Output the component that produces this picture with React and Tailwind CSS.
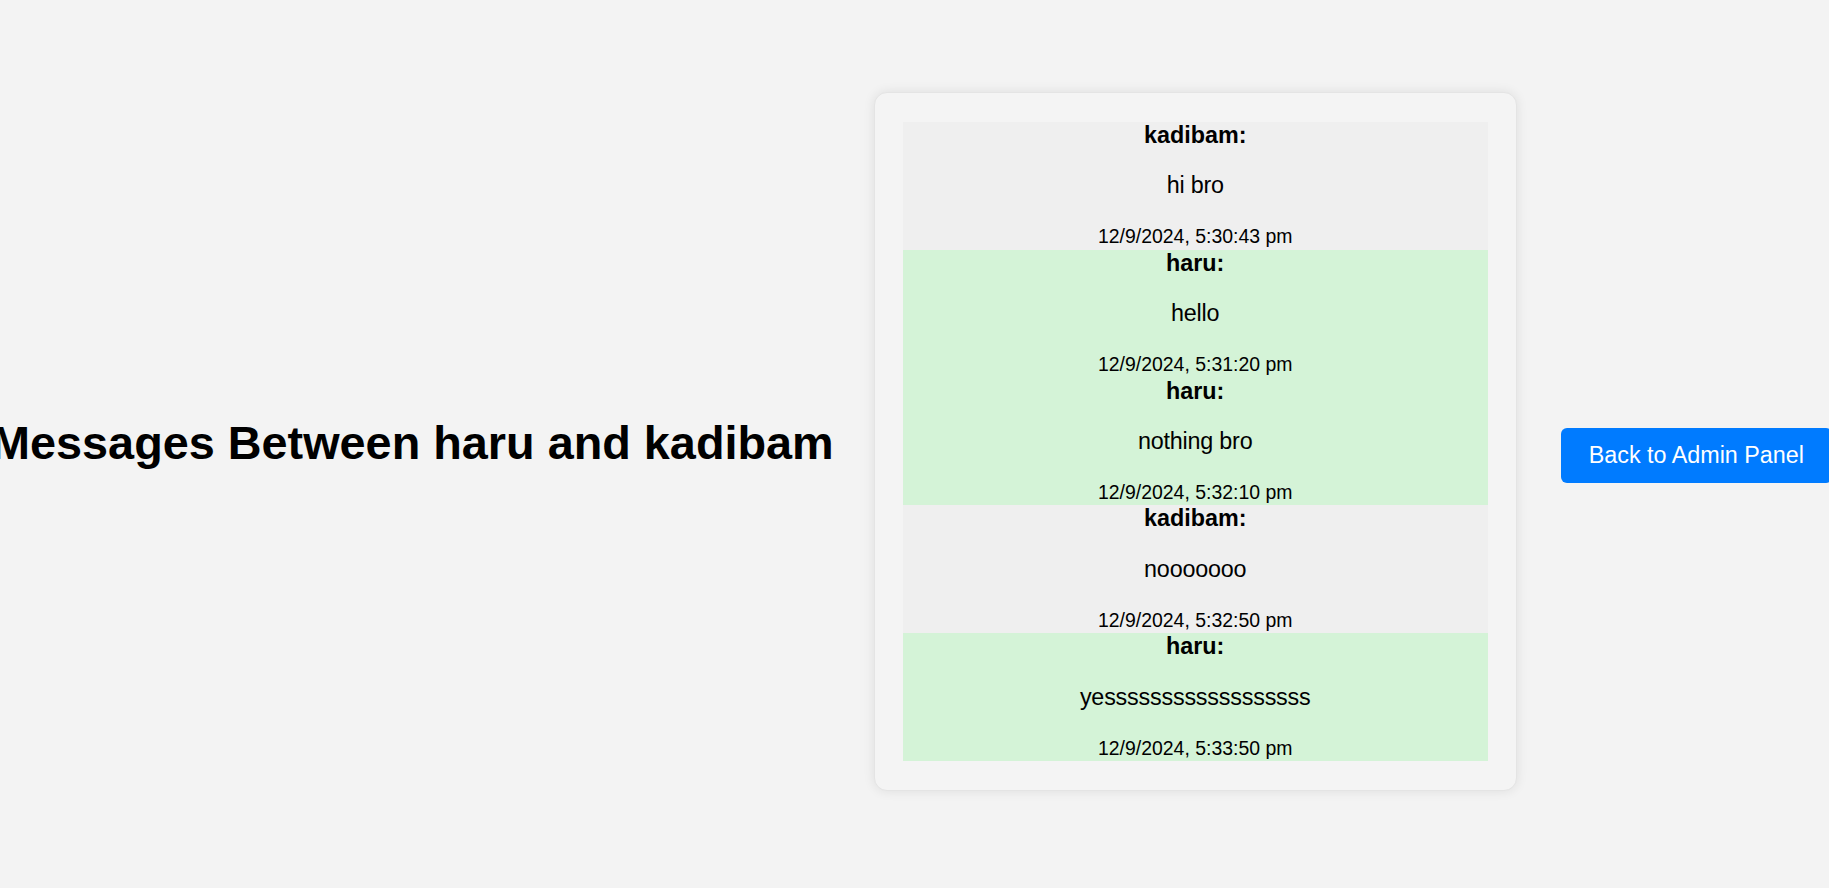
import React from "react";

const messages = [
  { from: "kadibam", text: "hi bro", time: "12/9/2024, 5:30:43 pm", mine: false },
  { from: "haru", text: "hello", time: "12/9/2024, 5:31:20 pm", mine: true },
  { from: "haru", text: "nothing bro", time: "12/9/2024, 5:32:10 pm", mine: true },
  { from: "kadibam", text: "nooooooo", time: "12/9/2024, 5:32:50 pm", mine: false },
  { from: "haru", text: "yessssssssssssssssss", time: "12/9/2024, 5:33:50 pm", mine: true },
];

export default function App() {
  return (
    <div className="h-[888px] w-full overflow-hidden bg-[#f3f3f3] flex items-center justify-center font-['Liberation_Sans',Arial,sans-serif] text-black">
      <h1 className="shrink-0 whitespace-nowrap text-[46.8px] font-bold leading-[54px] m-0 mb-[3px]">
        Messages Between haru and kadibam
      </h1>
      <div className="shrink-0 w-[643px] ml-[40px] mr-[24px] mb-[5px] bg-[#f4f4f4] border border-[#e4e4e4] rounded-[13px] shadow-[0_0_12px_rgba(0,0,0,0.09)] px-[28px] py-[29px]">
        <div className="flex flex-col">
          {messages.map((m, i) => (
            <div
              key={i}
              className={`text-center text-[23.33px] leading-[26.8px] ${m.mine ? "bg-[#d4f3d7]" : "bg-[#efefef]"}`}
            >
              <div className="font-bold">{m.from}:</div>
              <p className="my-[23.3px] tracking-[-0.2px]">{m.text}</p>
              <div>
                <span className="text-[19.44px]">{m.time}</span>
              </div>
            </div>
          ))}
        </div>
      </div>
      <button className="shrink-0 whitespace-nowrap ml-[20px] mr-[6px] mt-[23px] bg-[#007bff] text-white text-[23.33px] leading-[27px] px-[28px] py-[14px] rounded-[6px]">
        Back to Admin Panel
      </button>
    </div>
  );
}
